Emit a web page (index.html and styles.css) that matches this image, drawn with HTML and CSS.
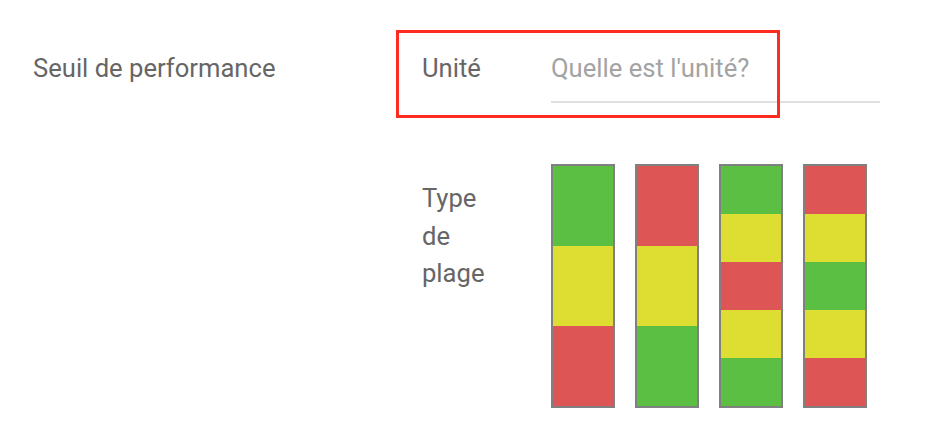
FILE: index.html
```html
<!DOCTYPE html>
<html lang="fr">
<head>
<meta charset="utf-8">
<title>Seuil de performance</title>
<link rel="stylesheet" href="styles.css">
</head>
<body>
<div class="form">
  <div class="label">Seuil de performance</div>
  <div class="sublabel">Unité</div>
  <div class="field"><input class="input" type="text" placeholder="Quelle est l'unité?"></div>

  <div></div>
  <div class="sublabel type">Type de plage</div>
  <div class="bars">
    <div class="bar"><span class="g"></span><span class="y"></span><span class="r"></span></div>
    <div class="bar"><span class="r"></span><span class="y"></span><span class="g"></span></div>
    <div class="bar"><span class="g"></span><span class="y"></span><span class="r"></span><span class="y"></span><span class="g"></span></div>
    <div class="bar"><span class="r"></span><span class="y"></span><span class="g"></span><span class="y"></span><span class="r"></span></div>
  </div>

  <div class="highlight"></div>
</div>
</body>
</html>
```
FILE: styles.css
```css
* { box-sizing: border-box; }
html, body { margin: 0; background: #ffffff; }
body {
  font-family: Roboto, "Liberation Sans", Arial, sans-serif;
  font-size: 25.6px;
  color: #666666;
}
.form {
  position: relative;
  display: grid;
  grid-template-columns: 389px 129px 329px;
  row-gap: 61px;
  padding: 54px 0 0 33px;
}
.label, .sublabel { line-height: 28px; }
.field { display: flex; }
.input {
  width: 100%;
  border: 0;
  border-bottom: 2px solid #e0e0e0;
  padding: 0 0 19px 0;
  margin: 0;
  font: inherit;
  line-height: 28px;
  height: 49px;
  color: #666666;
  outline: none;
  background: transparent;
}
.input::placeholder { color: #a3a3a3; opacity: 1; }
.type {
  width: 76px;
  line-height: 37.5px;
  padding-top: 16px;
}
.bars { display: flex; gap: 20px; }
.bar {
  width: 64px;
  height: 244px;
  border: 2px solid #808080;
  display: flex;
  flex-direction: column;
}
.bar span { flex: 1; }
.g { background: #5bbf44; }
.y { background: #dedd31; }
.r { background: #dd5555; }
.highlight {
  position: absolute;
  left: 396px;
  top: 30px;
  width: 384px;
  height: 88px;
  border: 3px solid #fd2b20;
  pointer-events: none;
}
```
